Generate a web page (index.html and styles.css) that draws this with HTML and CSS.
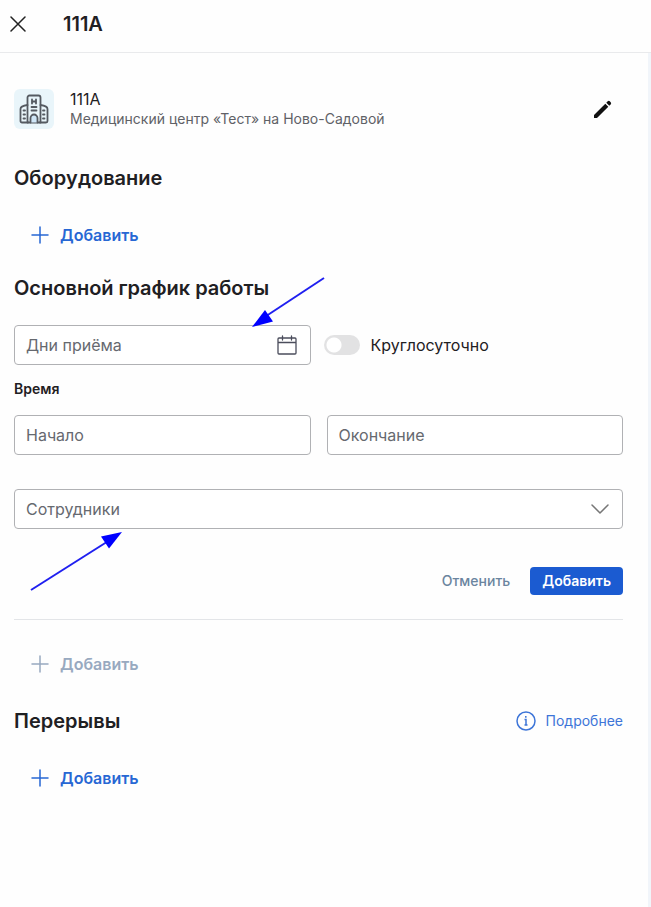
FILE: index.html
```html
<!DOCTYPE html>
<html lang="ru">
<head>
  <meta charset="UTF-8">
  <meta name="viewport" content="width=device-width, initial-scale=1">
  <title>111А</title>
  <link rel="stylesheet" href="styles.css">
</head>
<body>
<div class="drawer">
  <header class="drawer-header">
    <button type="button" class="icon-button" aria-label="Закрыть">
      <svg width="16" height="16" viewBox="0 0 16 16" fill="none" stroke="#222" stroke-width="1.5" stroke-linecap="round">
        <path d="M1 1l14 14M15 1L1 15"/>
      </svg>
    </button>
    <h1>111А</h1>
  </header>

  <main class="drawer-body">
    <div class="room">
      <div class="room-icon">
        <svg width="30" height="30" viewBox="0 0 30 30" fill="none" stroke="#555a61" stroke-width="1.8" stroke-linejoin="round" stroke-linecap="round">
          <path d="M9 28.5H3A1.500 1.500 0 0 1 1.500 27V15c0-2 3-3.500 7-4M21 28.500h6a1.500 1.500 0 0 0 1.500-1.500V15c0-2-3-3.500-7-4"/>
          <path d="M8.500 28.500V3.500a2 2 0 0 1 2-2h9a2 2 0 0 1 2 2v25z"/>
          <path d="M13 5.500v4M17 5.500v4M13 7.500h4M12.500 13h5M12.500 16.500h5"/>
          <path d="M11.500 28.500V24a3.500 3.500 0 0 1 7 0v4.500" fill="#cfe6f7"/>
          <path d="M4.500 16.500H6M4.500 20.500H6M4.500 24.500H6M24 16.500h1.500M24 20.500h1.500M24 24.500h1.500"/>
        </svg>
      </div>
      <div class="room-info">
        <div class="room-name">111А</div>
        <div class="room-place">Медицинский центр «Тест» на Ново-Садовой</div>
      </div>
      <button type="button" class="icon-button" aria-label="Редактировать">
        <svg width="20" height="20" viewBox="0 0 20 20" fill="#111">
          <path d="M1 16L12.300 4.700l3 3L4.500 18.500a2 2 0 0 1-1.500.500H1z"/>
          <path d="M13.300 3.700l1.400-1.400a1.500 1.500 0 0 1 2.100 0l.9.9a1.500 1.500 0 0 1 0 2.100l-1.400 1.400z"/>
        </svg>
      </button>
    </div>

    <section class="section equipment">
      <h2>Оборудование</h2>
      <button type="button" class="add-button">
        <svg width="18" height="18" viewBox="0 0 18 18" stroke="currentColor" stroke-width="1.5" stroke-linecap="round"><path d="M9 1v16M1 9h16"/></svg>
        Добавить
      </button>
    </section>

    <section class="section schedule">
      <h2>Основной график работы</h2>
      <form class="schedule-form">
        <div class="columns">
          <div class="field">
            <input type="text" id="days" name="days" placeholder="Дни приёма" aria-label="Дни приёма">
            <svg class="field-icon" width="20" height="20" viewBox="0 0 20 20" fill="none" stroke="#4b4d5c" stroke-width="1.3" stroke-linecap="round" stroke-linejoin="round">
              <path d="M2 3h16a1 1 0 0 1 1 1v14a1 1 0 0 1-1 1H2a1 1 0 0 1-1-1V4a1 1 0 0 1 1-1zM1 7.500h18M5.500 1v4M14.500 1v4"/>
            </svg>
            <svg class="arrow arrow-days" width="74" height="52" viewBox="0 0 74 52">
              <path d="M73 1L16 38.500" stroke="#1f1ff0" stroke-width="2"/>
              <path d="M1 50l13-17 8 11.500z" fill="#0000ff"/>
            </svg>
          </div>
          <label class="switch">
            <input type="checkbox" name="all-day">
            <span>Круглосуточно</span>
          </label>
        </div>

        <h3>Время</h3>
        <div class="columns">
          <input type="text" name="start" placeholder="Начало" aria-label="Начало">
          <input type="text" name="end" placeholder="Окончание" aria-label="Окончание">
        </div>

        <div class="field staff">
          <select name="staff" aria-label="Сотрудники">
            <option>Сотрудники</option>
          </select>
          <svg class="field-icon" width="18" height="10" viewBox="0 0 18 10" fill="none" stroke="#777" stroke-width="1.5" stroke-linecap="round" stroke-linejoin="round">
            <path d="M1 1l8 8 8-8"/>
          </svg>
          <svg class="arrow arrow-staff" width="94" height="62" viewBox="0 0 94 62">
            <path d="M1 60L76 12.500" stroke="#1f1ff0" stroke-width="2"/>
            <path d="M92 2L71 6.500l8 12z" fill="#0000ff"/>
          </svg>
        </div>

        <div class="actions">
          <button type="button" class="cancel-button">Отменить</button>
          <button type="submit" class="submit-button">Добавить</button>
        </div>
      </form>
      <button type="button" class="add-button" disabled>
        <svg width="18" height="18" viewBox="0 0 18 18" stroke="currentColor" stroke-width="1.5" stroke-linecap="round"><path d="M9 1v16M1 9h16"/></svg>
        Добавить
      </button>
    </section>

    <section class="section">
      <div class="section-title">
        <h2>Перерывы</h2>
        <a href="#" class="more-link">
          <svg width="20" height="20" viewBox="0 0 20 20" fill="none" stroke="currentColor" stroke-width="1.5">
            <circle cx="10" cy="10" r="9"/>
            <path d="M8.500 8.500H10V14M8.500 14h3M9.800 5v1.800"/>
          </svg>
          Подробнее
        </a>
      </div>
      <button type="button" class="add-button">
        <svg width="18" height="18" viewBox="0 0 18 18" stroke="currentColor" stroke-width="1.5" stroke-linecap="round"><path d="M9 1v16M1 9h16"/></svg>
        Добавить
      </button>
    </section>
  </main>
</div>
</body>
</html>
```

FILE: styles.css
```css
* {
  box-sizing: border-box;
}

body {
  margin: 0;
  background: #fefefe;
  color: #1f2023;
  font-family: Inter, "Noto Sans", sans-serif;
  font-size: 16px;
  line-height: 20px;
}

h1,
h2,
h3 {
  margin: 0;
  font-weight: 600;
}

h1,
h2 {
  font-size: 20px;
  line-height: 24px;
}

h1,
h2,
.room-name {
  font-kerning: none;
  font-feature-settings: "calt" 0;
}

h3 {
  margin: 14px 0 16px;
  font-size: 14px;
  line-height: 20px;
}

button {
  padding: 0;
  border: none;
  background: none;
  font-family: inherit;
  cursor: pointer;
}

svg {
  flex: none;
}

.drawer {
  display: flex;
  flex-direction: column;
  min-height: 100vh;
}

.drawer-header {
  display: flex;
  align-items: center;
  gap: 37px;
  padding: 12px 10px 16px;
  border-bottom: 1px solid #e9eaec;
}

.drawer-body {
  flex: 1;
  padding: 36px 25px 36px 14px;
  border-right: 3px solid #f1f5fa;
}

.icon-button {
  display: flex;
}

.room {
  display: flex;
  align-items: center;
  gap: 16px;
  padding-right: 10px;
}

.room-icon {
  display: flex;
  align-items: center;
  justify-content: center;
  width: 40px;
  height: 40px;
  border-radius: 6px;
  background: #e9f5fa;
}

.room-info {
  flex: 1;
}

.room-place {
  color: #5f6166;
  font-size: 14px;
}

.section {
  margin-top: 33px;
}

.equipment {
  margin-top: 37px;
}

.schedule {
  margin-top: 29px;
}

.section-title {
  display: flex;
  align-items: center;
  justify-content: space-between;
}

.add-button {
  display: flex;
  align-items: center;
  gap: 11px;
  margin: 33px 0 0 17px;
  color: #2767d4;
  font-size: 16px;
  font-weight: 600;
  line-height: 24px;
}

.add-button:disabled {
  color: #98a9c0;
  cursor: default;
}

.schedule-form {
  padding: 25px 0 24px;
  border-bottom: 1px solid #e3e5e8;
}

.schedule-form + .add-button {
  margin-top: 32px;
}

.columns {
  display: grid;
  grid-template-columns: 1fr 1fr;
  gap: 16px;
}

.field {
  position: relative;
}

input[type="text"],
select {
  display: block;
  width: 100%;
  height: 40px;
  padding: 0 11px;
  border: 1px solid #b0b1b4;
  border-radius: 4px;
  background: #fff;
  color: #66696f;
  font-family: inherit;
  font-size: 16px;
  appearance: none;
}

input::placeholder {
  color: #66696f;
}

/* icon laid over the right end of a control */
.field-icon {
  position: absolute;
  top: 0;
  bottom: 0;
  right: 14px;
  margin: auto;
  pointer-events: none;
}

.switch {
  display: flex;
  align-items: center;
  gap: 11px;
}

.switch input {
  width: 36px;
  height: 20px;
  margin: 0 0 0 -3px;
  border-radius: 10px;
  background: radial-gradient(circle at 10px 10px, #fff 7px, #e2e2e3 8px);
  appearance: none;
}

.switch input:checked {
  background: radial-gradient(circle at 26px 10px, #fff 7px, #1b5bd1 8px);
}

.staff {
  margin-top: 34px;
}

.arrow {
  position: absolute;
  pointer-events: none;
}

.arrow-days {
  top: -48px;
  right: -14px;
}

.arrow-staff {
  top: 41px;
  left: 16px;
}

.actions {
  display: flex;
  align-items: center;
  justify-content: flex-end;
  gap: 20px;
  margin-top: 38px;
}

.actions button {
  font-size: 14px;
  line-height: 20px;
}

.cancel-button {
  color: #6b859f;
  font-weight: 500;
}

.submit-button {
  padding: 4px 12px;
  border-radius: 4px;
  background: #1b5bd1;
  color: #fff;
  font-weight: 600;
}

.more-link {
  display: flex;
  align-items: center;
  gap: 10px;
  color: #3d75d8;
  font-size: 14px;
  text-decoration: none;
}
```
